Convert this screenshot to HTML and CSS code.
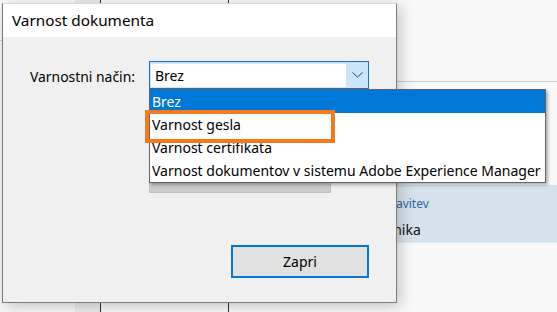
FILE: index.html
```html
<!DOCTYPE html>
<html lang="sl">
<head>
    <meta charset="UTF-8">
    <title>Varnost dokumenta</title>
    <link rel="stylesheet" href="styles.css">
</head>
<body>
    <div class="app">
        <div class="col col-a">
            <div class="col-a-head"></div>
        </div>
        <div class="col col-b"></div>
        <div class="col col-c"></div>
        <div class="col col-d">
            <div class="col-d-head"></div>
            <div class="panel">
                <div class="panel-link">Nastavitev</div>
                <div class="panel-text">Geslo uporabnika</div>
            </div>
        </div>

        <div class="dialog">
            <div class="dialog-title">Varnost dokumenta</div>
            <div class="dialog-body">
                <div class="form-row">
                    <label class="form-label">Varnostni način:</label>
                    <div class="combo-wrap">
                        <div class="combo">
                            <div class="combo-value">Brez</div>
                            <div class="combo-arrow">
                                <svg width="11" height="6" viewBox="0 0 11 6">
                                    <polyline points="0.5,0.5 5.5,5 10.5,0.5" fill="none" stroke="#3c3c3c" stroke-width="1"/>
                                </svg>
                            </div>
                        </div>
                        <ul class="combo-list">
                            <li class="selected">Brez</li>
                            <li>Varnost gesla</li>
                            <li>Varnost certifikata</li>
                            <li>Varnost dokumentov v sistemu Adobe Experience Manager</li>
                            <span class="mark"></span>
                        </ul>
                    </div>
                </div>
                <div class="form-row">
                    <span></span>
                    <button class="btn-disabled"></button>
                </div>
                <div class="dialog-foot">
                    <button class="btn-close">Zapri</button>
                </div>
            </div>
        </div>
    </div>
</body>
</html>
```

FILE: styles.css
```css
body {
    margin: 0;
    padding: 0;
    font-family: "Noto Sans", "Open Sans", sans-serif;
    background: #f9f9f9;
}
.app {
    position: relative;
    height: 312px;
    overflow: hidden;
    display: grid;
    grid-template-columns: 75px 26px 128px 1fr;
}
.col {
    box-sizing: border-box;
}
.col-a-head {
    height: 40px;
    border-bottom: 1px solid #d4d4d4;
}
.col-b {
    background: #ececec;
    border-right: 1px solid #2b2b2b;
}
.col-c {
    border-right: 1px solid #2b2b2b;
}
.col-d-head {
    height: 81px;
    border-bottom: 1px solid #cdcdcd;
}
.panel {
    margin-top: 103px;
    height: 58px;
    background: #d6e2eb;
    border-bottom: 1px solid #e4e9ee;
    box-sizing: border-box;
    padding: 10px 0 0 141px;
}
.panel-link {
    font-size: 12px;
    color: #3465a4;
    line-height: 18px;
}
.panel-text {
    font-size: 14px;
    line-height: 20px;
    margin-top: 7px;
    margin-left: -65px;
    color: #111;
}

/* dialog */
.dialog {
    position: absolute;
    left: 2px;
    top: 3px;
    width: 395px;
    height: 300px;
    box-sizing: border-box;
    border: 1px solid #7a7a7a;
    border-top-color: #d8d8d8;
    background: #f0f0f0;
    box-shadow: 3px 3px 14px rgba(0, 0, 0, 0.22);
}
.dialog-title {
    height: 33px;
    background: #fff;
    padding-left: 9px;
    font-size: 15.3px;
    line-height: 32px;
    color: #000;
}
.dialog-body {
    padding: 24px 27px 0 27px;
}
.form-row {
    display: grid;
    grid-template-columns: 119px 1fr;
    align-items: center;
}
.form-label {
    font-size: 13.9px;
    color: #000;
    padding-top: 2px;
}
.combo-wrap {
    position: relative;
}
.combo {
    display: flex;
    height: 28px;
    box-sizing: border-box;
    border: 1px solid #1a6fc4;
    background: #cce4f7;
}
.combo-value {
    flex: 1;
    background: #fff;
    margin: 2px 0 1px 1px;
    padding-left: 4px;
    font-size: 14px;
    line-height: 23px;
}
.combo-arrow {
    width: 22px;
    display: flex;
    align-items: center;
    justify-content: center;
}
.combo-list {
    position: absolute;
    left: 0;
    top: 28px;
    width: 397px;
    margin: 0;
    padding: 0;
    list-style: none;
    background: #fff;
    border: 1px solid #646464;
    box-sizing: border-box;
    box-shadow: 2px 2px 3px rgba(0, 0, 0, 0.3);
    z-index: 2;
}
.combo-list li {
    height: 23px;
    line-height: 23px;
    padding-left: 2px;
    font-size: 14px;
    color: #000;
    white-space: nowrap;
}
.combo-list li.selected {
    background: #0078d7;
    color: #fff;
}
.mark {
    position: absolute;
    left: -5px;
    top: 20px;
    width: 190px;
    height: 33px;
    box-sizing: border-box;
    border: 4px solid #f47a20;
}
.btn-disabled {
    margin-top: 74px;
    width: 182px;
    height: 30px;
    background: #cccccc;
    border: 1px solid #bfbfbf;
}
.dialog-foot {
    display: flex;
    justify-content: flex-end;
    margin-top: 52px;
}
.btn-close {
    width: 138px;
    height: 33px;
    background: #e1e1e1;
    border: 2px solid #0078d7;
    font-family: inherit;
    font-size: 14px;
    color: #000;
    padding: 0;
}
```
